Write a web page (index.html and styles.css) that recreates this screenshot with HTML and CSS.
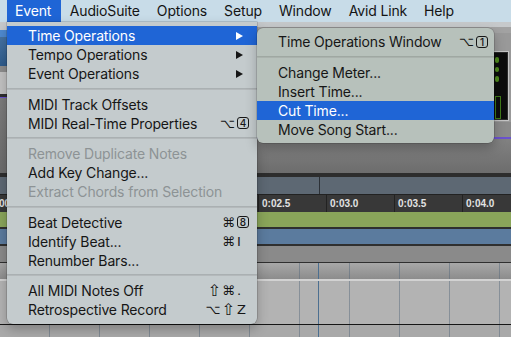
FILE: index.html
```html
<!DOCTYPE html>
<html lang="en">
<head>
<meta charset="UTF-8">
<meta name="viewport" content="width=device-width, initial-scale=1.0">
<title>Event Menu</title>
<link rel="stylesheet" href="styles.css">
</head>
<body>
    <!-- Menu bar -->
    <div class="menubar">
        <span class="menu-title active">Event</span>
        <span class="menu-title">AudioSuite</span>
        <span class="menu-title">Options</span>
        <span class="menu-title">Setup</span>
        <span class="menu-title">Window</span>
        <span class="menu-title">Avid Link</span>
        <span class="menu-title">Help</span>
    </div>

    <!-- Edit window behind the open menus -->
    <div class="app">
        <div class="top">
            <div class="side">
                <div class="side-light"></div>
                <div class="side-blue"></div>
                <div class="side-navy"></div>
                <div class="side-gray"></div>
                <div class="side-dots"></div>
                <div class="side-dark"></div>
                <div class="side-edit"></div>
            </div>
            <div class="main">
                <div class="toolbar">
                    <div class="counter">
                        <span class="led"></span>
                        <span class="led"></span>
                        <span class="led"></span>
                        <span class="led-box"></span>
                    </div>
                </div>
                <div class="edit-area"></div>
            </div>
        </div>
        <div class="ruler-gap"></div>
        <div class="ruler bars">
            <span class="bar"></span>
            <span class="bar"></span>
            <span class="bar"></span>
            <span class="bar">3</span>
            <span class="bar"></span>
        </div>
        <!-- ticks under the menu carry no label -->
        <div class="ruler timecode">
            <span class="tick">0:00.5</span>
            <span class="tick"></span>
            <span class="tick"></span>
            <span class="tick"></span>
            <span class="tick">0:02.5</span>
            <span class="tick">0:03.0</span>
            <span class="tick">0:03.5</span>
            <span class="tick">0:04.0</span>
        </div>
        <div class="track green"></div>
        <div class="track blue"></div>
        <div class="track gray"></div>
        <div class="lane-head grid"></div>
        <div class="lane grid"></div>
        <div class="lane-bottom grid"></div>
    </div>

    <!-- Event menu -->
    <div class="menu event-menu">
        <div class="item hl"><span class="label">Time Operations</span><span class="arrow"></span></div>
        <div class="item"><span class="label">Tempo Operations</span><span class="arrow"></span></div>
        <div class="item"><span class="label">Event Operations</span><span class="arrow"></span></div>
        <div class="sep"></div>
        <div class="item"><span class="label">MIDI Track Offsets</span></div>
        <div class="item"><span class="label">MIDI Real-Time Properties</span><span class="keys"><span class="mods">⌥</span><span class="key"><span class="pad">4</span></span></span></div>
        <div class="sep"></div>
        <div class="item off"><span class="label">Remove Duplicate Notes</span></div>
        <div class="item"><span class="label">Add Key Change...</span></div>
        <div class="item off"><span class="label">Extract Chords from Selection</span></div>
        <div class="sep"></div>
        <div class="item"><span class="label">Beat Detective</span><span class="keys"><span class="mods">⌘</span><span class="key"><span class="pad">8</span></span></span></div>
        <div class="item"><span class="label">Identify Beat...</span><span class="keys"><span class="mods">⌘</span><span class="key">I</span></span></div>
        <div class="item"><span class="label">Renumber Bars...</span></div>
        <div class="sep"></div>
        <div class="item"><span class="label">All MIDI Notes Off</span><span class="keys"><span class="mods"><span class="shift">⇧</span>⌘</span><span class="key">.</span></span></div>
        <div class="item"><span class="label">Retrospective Record</span><span class="keys"><span class="mods">⌥<span class="shift">⇧</span></span><span class="key">Z</span></span></div>
    </div>

    <!-- Time Operations submenu -->
    <div class="menu sub-menu">
        <div class="item"><span class="label">Time Operations Window</span><span class="keys"><span class="mods">⌥</span><span class="key"><span class="pad">1</span></span></span></div>
        <div class="sep"></div>
        <div class="item"><span class="label">Change Meter...</span></div>
        <div class="item"><span class="label">Insert Time...</span></div>
        <div class="item hl"><span class="label">Cut Time...</span></div>
        <div class="item"><span class="label">Move Song Start...</span></div>
    </div>
</body>
</html>
```

FILE: styles.css
```css
body {
    margin: 0;
    width: 511px;
    height: 337px;
    overflow: hidden;
    position: relative;
    font-family: Inter, "DejaVu Sans", sans-serif;
    background: #a9a9a9;
}

/* ---------- menu bar ---------- */

.menubar {
    height: 22px;
    display: flex;
    padding-left: 7px;
    background: #c8dce8;
    color: #141414;
    font-size: 14px;
    letter-spacing: -0.15px;
}

.menu-title {
    line-height: 22px;
    padding: 0 8.5px;
}

.menu-title.active {
    background: #1f65d6;
    color: #fff;
    padding: 0 10px 0 8px;
}

/* ---------- app behind ---------- */

.top {
    height: 151px;
    display: flex;
}

.side {
    width: 7px;
    display: flex;
    flex-direction: column;
}

.side-light { height: 8px; background: #c8cacc; }
.side-blue { height: 7px; background: #4f8ad0; }
.side-navy { height: 29px; background: linear-gradient(#4673a3, #2f5c8c); }
.side-gray { height: 6px; background: #8d8d8d; }
.side-dots { height: 22px; background: #c2c2c2; }
.side-dark {
    height: 3px;
    background: #2e2e2e;
    border-bottom: 1px solid #6b52cf;
}
.side-edit { flex: 1; background: linear-gradient(#7c7c7c, #6c6c6c); }

.main {
    flex: 1;
    display: flex;
    flex-direction: column;
}

.toolbar {
    height: 115px;
    display: flex;
    justify-content: flex-end;
    align-items: flex-start;
    background: linear-gradient(#c6c9cb 0 5px, #a2a2a2 5px 11px, #999 11px 100px, #8a8a8a 100px);
    border-bottom: 2px solid #6b52cf;
}

.counter {
    width: 40px;
    height: 68px;
    margin: 30px 3px 0 0;
    background: #0c0c0c;
    border: 1px solid #2a2a2a;
    box-shadow: 0 0 0 1px #c4c4c4;
    display: flex;
    flex-direction: column;
    align-items: flex-start;
    gap: 4px;
    padding: 4px 0 0 26px;
    box-sizing: border-box;
}

.led {
    width: 4px;
    height: 6px;
    border-radius: 2px;
    background: #4f8a1e;
}

.led-box {
    width: 4px;
    height: 22px;
    margin-top: 10px;
    border: 1px solid #3f7a18;
}

.edit-area {
    flex: 1;
    background: linear-gradient(#818181, #6d6d6d);
}

.ruler-gap {
    height: 4px;
    background: #2d2d2d;
}

.ruler {
    display: flex;
    margin-left: -14px;
    font-family: "Liberation Sans", Arial, sans-serif;
    font-weight: bold;
    font-size: 10px;
    color: #e2e2e2;
}

.bars {
    height: 17px;
    margin-left: -81px;
    background: #5d6873;
}

.bar {
    flex: 0 0 100px;
    border-left: 1px solid #2c3137;
    padding: 3px 0 0 4px;
    box-sizing: border-box;
}

.timecode {
    height: 18px;
    background: #383838;
    border-top: 1px solid #222;
    box-sizing: border-box;
}

.tick {
    flex: 0 0 68px;
    border-left: 1px solid #222;
    padding: 3px 0 0 3px;
    box-sizing: border-box;
}

.track {
    height: 15px;
    border-bottom: 2px solid #2f2f2f;
}

.track.green { background: #8aa55a; }
.track.blue { background: #5b7b9e; }
.track.gray { height: 16px; background: #8a8a8a; border-bottom-width: 1px; }

.grid {
    background-image:
        linear-gradient(90deg, transparent 318px, #4c6f90 318px 319px, transparent 319px),
        repeating-linear-gradient(90deg, transparent 0 49px, rgba(80, 100, 120, 0.45) 49px 50px);
}

.lane-head {
    height: 16px;
    background-color: #999;
    background-image:
        linear-gradient(90deg, transparent 318px, #4c6f90 318px 319px, transparent 319px),
        repeating-linear-gradient(90deg, transparent 0 49px, rgba(80, 100, 120, 0.45) 49px 50px),
        linear-gradient(#a8a8a8, #8c8c8c);
    border-bottom: 2px solid #d2d2d2;
}

.lane {
    height: 43px;
    background-color: #b3b3b3;
    border-bottom: 1px solid #161616;
}

.lane-bottom {
    height: 12px;
    background-color: #a9a9a9;
}

/* ---------- menus ---------- */

.menu {
    position: absolute;
    font-size: 14px;
    letter-spacing: -0.15px;
    color: #161616;
    box-shadow: 0 0 0 0.5px rgba(0, 0, 0, 0.25), 0 5px 12px rgba(0, 0, 0, 0.25);
}

.event-menu {
    left: 7px;
    top: 22px;
    width: 250px;
    padding: 4px 0 5px;
    background: #c4cbcd;
    border-radius: 0 0 6px 6px;
}

.sub-menu {
    left: 257px;
    top: 28px;
    width: 237px;
    padding: 4px 0;
    background: #b7c1bb;
    border-radius: 6px;
}

.item {
    height: 19px;
    display: flex;
    align-items: center;
    padding: 0 7px 0 21px;
}

.sub-menu .item {
    padding-right: 5px;
}

.label {
    flex: 1;
    white-space: nowrap;
}

.item.hl {
    background: #1f65d6;
    color: #fff;
}

.item.off {
    color: #8d9395;
}

.arrow {
    width: 0;
    height: 0;
    margin-right: 7px;
    border-left: 7px solid currentColor;
    border-top: 4.5px solid transparent;
    border-bottom: 4.5px solid transparent;
}

.sep {
    height: 11.5px;
    display: flex;
    align-items: center;
}

.sep::after {
    content: "";
    flex: 1;
    height: 1px;
    background: rgba(0, 0, 0, 0.13);
    border-bottom: 1px solid rgba(255, 255, 255, 0.12);
}

.keys {
    display: flex;
    align-items: center;
    font-family: "DejaVu Sans", sans-serif;
    font-size: 13px;
    letter-spacing: 1px;
}

.mods {
    display: flex;
    align-items: center;
}

.shift {
    font-size: 16px;
    line-height: 1;
}

.key {
    width: 13px;
    margin-left: 1px;
    letter-spacing: 0;
}

.pad {
    display: flex;
    align-items: center;
    justify-content: center;
    width: 10px;
    height: 10px;
    border: 1.2px solid currentColor;
    border-radius: 3px;
    font-family: Inter, sans-serif;
    font-size: 10px;
    font-weight: 500;
}
```
